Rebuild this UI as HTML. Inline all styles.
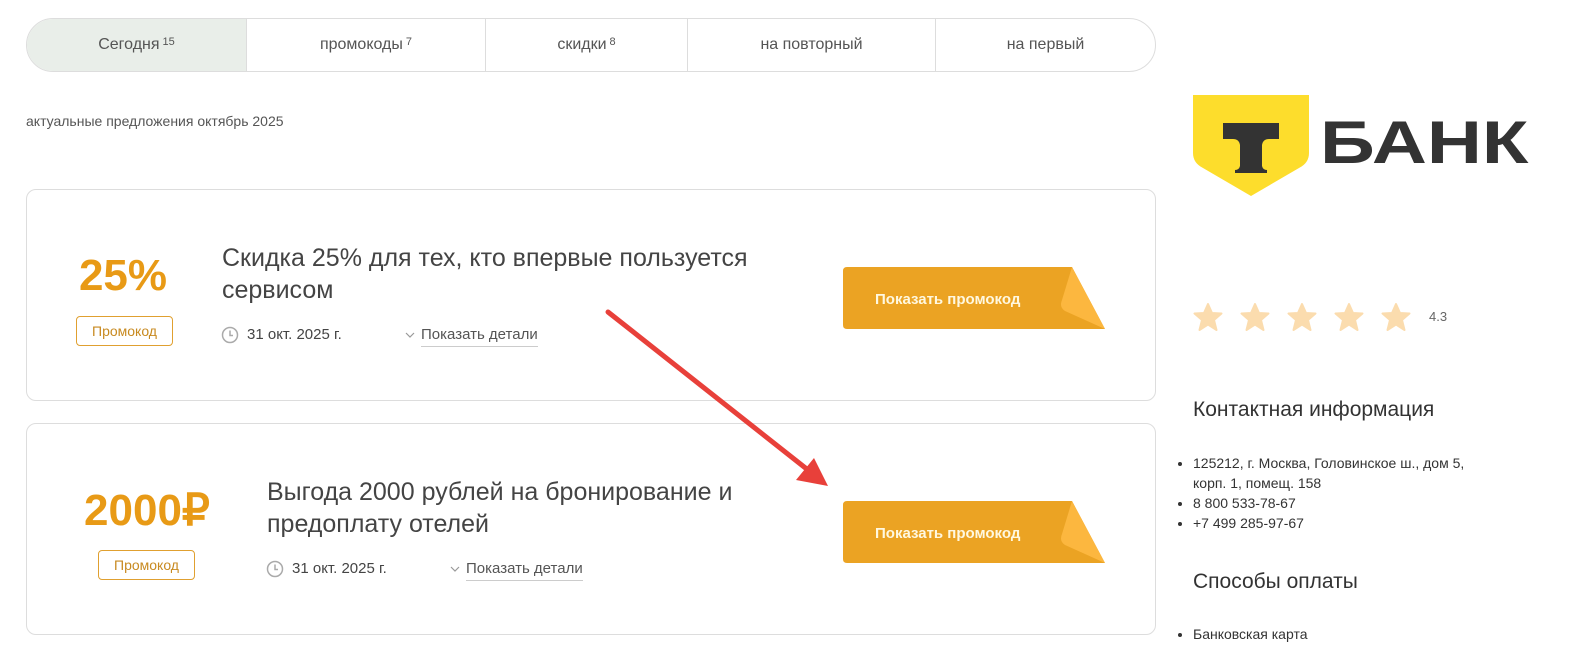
<!DOCTYPE html>
<html><head><meta charset="utf-8"><style>
*{box-sizing:border-box;margin:0;padding:0}
body{width:1581px;height:651px;background:#fff;font-family:"Liberation Sans","Noto Sans CJK SC",sans-serif;color:#444;position:relative;overflow:hidden}
.abs{position:absolute}
.tabs{left:26px;top:18px;width:1130px;height:54px;border:1px solid #ddd;border-radius:27px;overflow:hidden;display:flex}
.tabs div{height:100%;display:flex;align-items:center;justify-content:center;font-size:16px;color:#555;border-left:1px solid #ddd}
.tabs div:first-child{border-left:none;background:#e9eee9}
sup{font-size:11px;margin-left:3px;position:relative;top:-3px}
.card{left:26px;width:1130px;height:212px;border:1px solid #ddd;border-radius:10px}
.big{color:#e89a16;font-weight:bold;font-size:44px;text-align:center}
.tag{border:1px solid #e0a030;color:#c88a20;border-radius:4px;font-size:14px;height:30px;line-height:28px;text-align:center}
.title{font-size:25px;color:#444;line-height:32px}
.meta{font-size:15px;color:#444}
.det{font-size:15px;color:#555;border-bottom:1px solid #ccc;padding-bottom:3px}
.chev{position:absolute;left:-16px;top:5px}
.btn{width:262px;height:62px}
.side h3{font-weight:normal;font-size:21px;color:#333}
ul{font-size:14px;color:#333;line-height:20px;padding-left:18px}
</style></head><body>
<div class="abs tabs">
<div style="width:219px">Сегодня<sup>15</sup></div>
<div style="width:239px">промокоды<sup>7</sup></div>
<div style="width:202px">скидки<sup>8</sup></div>
<div style="width:248px">на повторный</div>
<div style="flex:1">на первый</div>
</div>
<div class="abs" style="left:26px;top:113px;font-size:14px;color:#555">актуальные предложения октябрь 2025</div>

<div class="abs card" style="top:189px"></div>
<div class="abs big" style="left:54px;top:251px;width:138px">25%</div>
<div class="abs tag" style="left:76px;top:316px;width:97px">Промокод</div>
<div class="abs title" style="left:222px;top:242px">Скидка 25% для тех, кто впервые пользуется<br>сервисом</div>
<svg class="abs" style="left:221px;top:326px" width="18" height="18" viewBox="0 0 18 18"><circle cx="9" cy="9" r="7.5" fill="none" stroke="#aaa" stroke-width="1.5"/><path d="M9 4.5V9.5H12" fill="none" stroke="#aaa" stroke-width="1.5"/></svg>
<div class="abs meta" style="left:247px;top:326px">31 окт. 2025 г.</div>
<div class="abs det" style="left:421px;top:326px"><svg class="chev" width="10" height="8" viewBox="0 0 10 8"><path d="M1 2L5 6L9 2" fill="none" stroke="#999" stroke-width="1.2"/></svg>Показать детали</div>
<svg class="abs btn" style="left:843px;top:267px" viewBox="0 0 262 62"><path d="M4 0H229L262 62H4Q0 62 0 58V4Q0 0 4 0Z" fill="#eba323"/><path d="M229 0L262 62L222 44Q216 40 219 33Z" fill="#fcb73f"/><text x="32" y="37" font-family="Liberation Sans" font-weight="bold" font-size="15" fill="#fff8e0">Показать промокод</text></svg>

<div class="abs card" style="top:423px"></div>
<div class="abs big" style="left:70px;top:485px;width:154px">2000₽</div>
<div class="abs tag" style="left:98px;top:550px;width:97px">Промокод</div>
<div class="abs title" style="left:267px;top:476px">Выгода 2000 рублей на бронирование и<br>предоплату отелей</div>
<svg class="abs" style="left:266px;top:560px" width="18" height="18" viewBox="0 0 18 18"><circle cx="9" cy="9" r="7.5" fill="none" stroke="#aaa" stroke-width="1.5"/><path d="M9 4.5V9.5H12" fill="none" stroke="#aaa" stroke-width="1.5"/></svg>
<div class="abs meta" style="left:292px;top:560px">31 окт. 2025 г.</div>
<div class="abs det" style="left:466px;top:560px"><svg class="chev" width="10" height="8" viewBox="0 0 10 8"><path d="M1 2L5 6L9 2" fill="none" stroke="#999" stroke-width="1.2"/></svg>Показать детали</div>
<svg class="abs btn" style="left:843px;top:501px" viewBox="0 0 262 62"><path d="M4 0H229L262 62H4Q0 62 0 58V4Q0 0 4 0Z" fill="#eba323"/><path d="M229 0L262 62L222 44Q216 40 219 33Z" fill="#fcb73f"/><text x="32" y="37" font-family="Liberation Sans" font-weight="bold" font-size="15" fill="#fff8e0">Показать промокод</text></svg>

<svg class="abs" style="left:0;top:0" width="1581" height="651"><line x1="608" y1="312" x2="808" y2="470" stroke="#e8403a" stroke-width="5" stroke-linecap="round"/><path d="M828 486L796 480L814 458Z" fill="#e8403a"/></svg>

<svg class="abs" style="left:1193px;top:95px" width="116" height="101" viewBox="0 0 116 101"><path d="M0 0H116V58Q116 68 106 73L58 101L10 73Q0 68 0 58Z" fill="#fddd2c"/><path d="M30 28H86V44H76Q70 44 69 50V71Q70 75 74 75V78H42V75Q46 75 47 71V50Q46 44 40 44H30Z" fill="#333"/></svg>
<div class="abs" style="left:1320px;top:108px;font-size:60px;font-weight:bold;color:#333;transform:scaleX(1.27);transform-origin:left">БАНК</div>
<svg class="abs" style="left:1193px;top:303px" width="230" height="30">
<g fill="#fbdcae"><path id="s" d="M15 1L19 10L28.5 10.5L21 17L23.5 27L15 21.5L6.5 27L9 17L1.5 10.5L11 10Z" stroke="#fbdcae" stroke-width="2" stroke-linejoin="round"/><use href="#s" x="47"/><use href="#s" x="94"/><use href="#s" x="141"/><use href="#s" x="188"/></g></svg>
<div class="abs" style="left:1429px;top:309px;font-size:13px;color:#666">4.3</div>
<div class="abs side" style="left:1193px;top:398px"><h3>Контактная информация</h3></div>
<ul class="abs" style="left:1175px;top:453px;width:380px;line-height:20px;font-size:14px">
<li>125212, г. Москва, Головинское ш., дом 5,<br>корп. 1, помещ. 158</li><li>8 800 533-78-67</li><li>+7 499 285-97-67</li></ul>
<div class="abs side" style="left:1193px;top:570px"><h3>Способы оплаты</h3></div>
<ul class="abs" style="left:1175px;top:624px;font-size:14px"><li>Банковская карта</li></ul>
</body></html>
